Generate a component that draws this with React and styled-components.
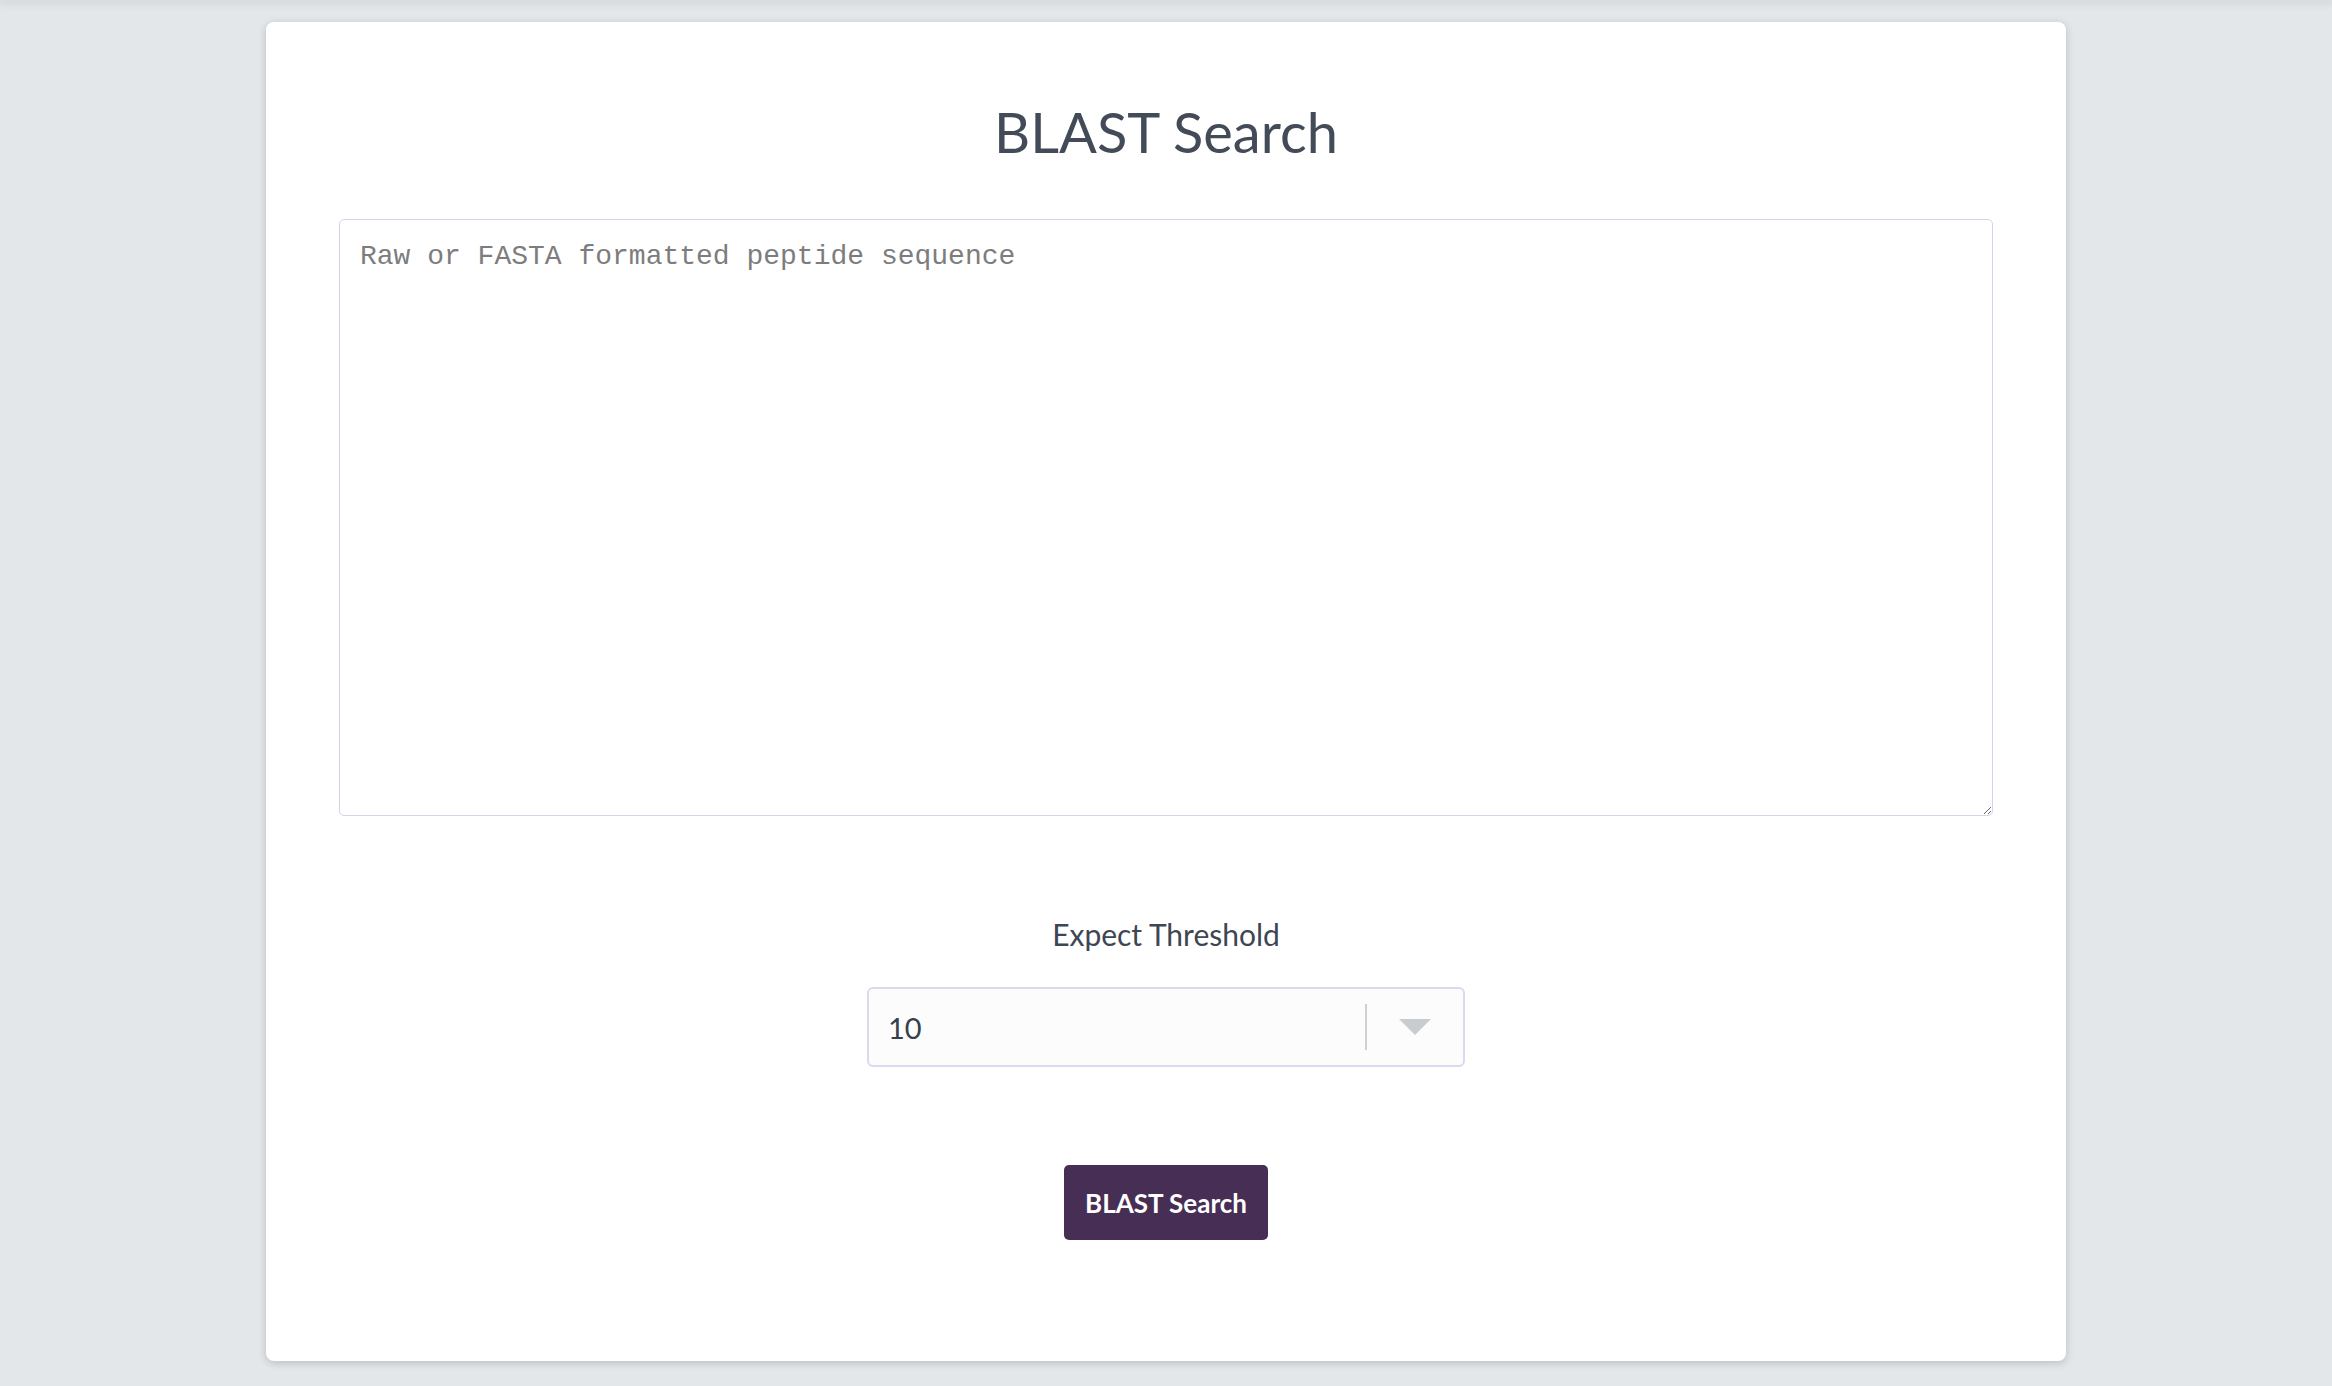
import React from 'react'
import styled, { createGlobalStyle } from 'styled-components'

const GlobalStyle = createGlobalStyle`
  html, body {
    margin: 0;
    padding: 0;
    background: #e4e7ea;
    font-family: Lato, "Liberation Sans", sans-serif;
  }
`

const Page = styled.div`
  min-height: 1386px;
  display: flex;
  flex-direction: column;
  align-items: center;
`

const TopShade = styled.div`
  align-self: stretch;
  height: 0;
  box-shadow: 0 0 9px 3px rgba(0, 0, 0, 0.09);
`

const Card = styled.section`
  margin-top: 22px;
  width: 1800px;
  box-sizing: border-box;
  padding: 76px 73px 121px;
  background: #fff;
  border-radius: 8px;
  box-shadow: 0 2px 8px rgba(0, 0, 0, 0.18);
  display: flex;
  flex-direction: column;
  align-items: center;
`

const Title = styled.h1`
  margin: 0;
  font-size: 56px;
  line-height: 1.2;
  font-weight: 400;
  color: #424b57;
`

const Sequence = styled.textarea`
  margin-top: 54px;
  width: 100%;
  height: 597px;
  box-sizing: border-box;
  padding: 20px;
  border: 1px solid #d6d2ec;
  border-radius: 5px;
  font-family: "Liberation Mono", monospace;
  font-size: 28px;
  line-height: 1.2;
  color: #333;
  outline: none;
  resize: vertical;

  &::placeholder {
    color: #7d7d7d;
  }
`

const Label = styled.label`
  margin-top: 100px;
  font-size: 30px;
  line-height: 1.2;
  color: #3d4652;
`

const Select = styled.div`
  margin-top: 35px;
  width: 598px;
  height: 80px;
  box-sizing: border-box;
  border: 2px solid #dcd8ef;
  border-radius: 6px;
  background: #fcfcfd;
  display: flex;
  align-items: center;
`

const Value = styled.span`
  flex: 1;
  padding-left: 19px;
  font-size: 29px;
  color: #36404c;
`

const Divider = styled.span`
  width: 2px;
  height: 46px;
  background: #cdd0d5;
`

const Arrow = styled.span`
  width: 96px;
  display: flex;
  justify-content: center;
  align-items: center;
`

const Caret = styled.span`
  width: 0;
  height: 0;
  border-left: 16px solid transparent;
  border-right: 16px solid transparent;
  border-top: 16px solid #c8cbd0;
`

const SearchButton = styled.button`
  margin-top: 98px;
  width: 204px;
  height: 75px;
  border: none;
  border-radius: 5px;
  background: #472e54;
  color: #fff;
  font-family: Lato, "Liberation Sans", sans-serif;
  font-size: 26px;
  font-weight: 700;
  cursor: pointer;
`

export default function App() {
  return (
    <Page>
      <GlobalStyle />
      <TopShade />
      <Card>
        <Title>BLAST Search</Title>
        <Sequence placeholder="Raw or FASTA formatted peptide sequence" />
        <Label>Expect Threshold</Label>
        <Select>
          <Value>10</Value>
          <Divider />
          <Arrow>
            <Caret />
          </Arrow>
        </Select>
        <SearchButton>BLAST Search</SearchButton>
      </Card>
    </Page>
  )
}
